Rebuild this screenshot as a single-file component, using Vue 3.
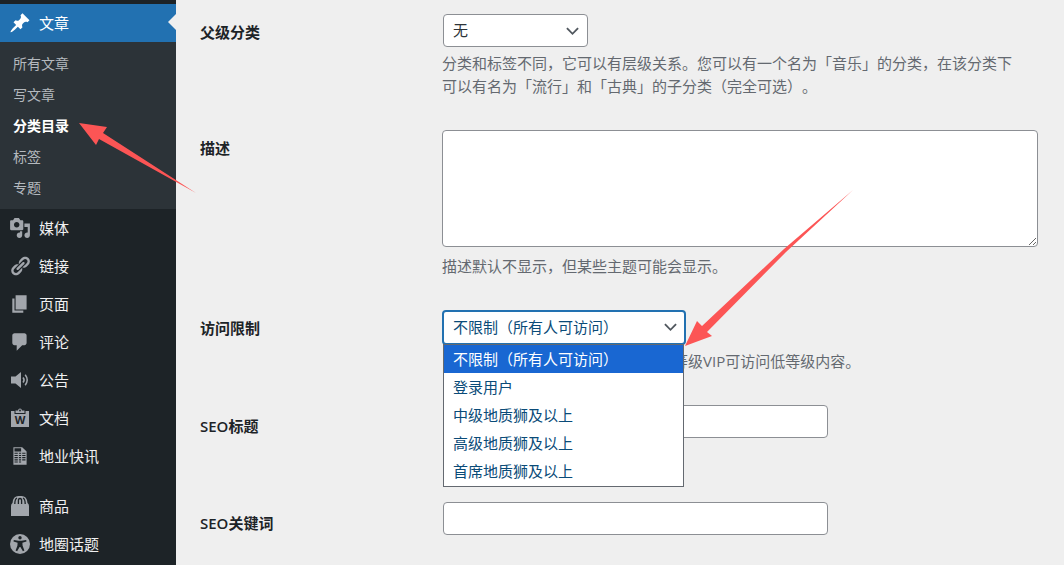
<script setup>
import { ref } from 'vue'

const submenu = ['所有文章', '写文章', '分类目录', '标签', '专题']
const currentSub = '分类目录'

const mainMenu = [
  { icon: 'media', label: '媒体' },
  { icon: 'links', label: '链接' },
  { icon: 'page', label: '页面' },
  { icon: 'comments', label: '评论' },
  { icon: 'volume', label: '公告' },
  { icon: 'docs', label: '文档' },
  { icon: 'sheet', label: '地业快讯' },
]
const extraMenu = [
  { icon: 'bag', label: '商品' },
  { icon: 'access', label: '地圈话题' },
]

const paths = {
  pin: 'M10.44 3.02l1.82-1.82 6.36 6.35-1.83 1.82c-1.05-.68-2.48-.57-3.41.36l-.75.75c-.92.93-1.04 2.35-.35 3.41l-1.83 1.82-2.41-2.41-2.8 2.79c-.42.42-3.38 2.71-3.8 2.29s1.86-3.39 2.28-3.81l2.79-2.79L4.1 9.36l1.83-1.82c1.05.69 2.48.57 3.4-.36l.75-.75c.93-.92 1.05-2.35.36-3.41z',
  media: 'M13 11V4c0-.55-.45-1-1-1h-1.67L9 1H5L3.67 3H2c-.55 0-1 .45-1 1v7c0 .55.45 1 1 1h10c.55 0 1-.45 1-1zM7 4.5c1.38 0 2.5 1.12 2.5 2.5S8.38 9.5 7 9.5 4.5 8.38 4.5 7 5.62 4.5 7 4.5zM14 6h5v10.5c0 1.38-1.12 2.5-2.5 2.5S14 17.88 14 16.5s1.12-2.5 2.5-2.5c.17 0 .34.02.5.05V9h-3V6zm-4 8.05V13h2v3.5c0 1.38-1.12 2.5-2.5 2.5S7 17.88 7 16.5 8.12 14 9.5 14c.17 0 .34.02.5.05z',
  links: 'M17.74 2.76c1.68 1.69 1.68 4.41 0 6.1l-1.53 1.52c-1.12 1.12-2.7 1.47-4.14 1.09l2.62-2.61.76-.77.76-.76c.84-.84.84-2.2 0-3.04-.84-.85-2.2-.85-3.04 0l-.77.76-3.38 3.38c-.37-1.44-.02-3.02 1.1-4.14l1.52-1.53c1.69-1.68 4.42-1.68 6.1 0zM8.59 13.43l5.34-5.34c.42-.42.42-1.1 0-1.52-.44-.43-1.13-.39-1.53 0l-5.33 5.34c-.42.42-.42 1.1 0 1.52.44.43 1.13.39 1.52 0zm-.76 2.29l4.14-4.15c.38 1.44.03 3.02-1.09 4.14l-1.52 1.53c-1.69 1.68-4.41 1.68-6.1 0-1.68-1.68-1.68-4.42 0-6.1l1.53-1.52c1.12-1.12 2.7-1.47 4.14-1.1l-4.14 4.15c-.85.84-.85 2.2 0 3.05.84.84 2.2.84 3.04 0z',
  page: 'M6 15V2h10v13H6zm-1 1h8v2H3V5h2v11z',
  comments: 'M5 2h9c1.1 0 2 .9 2 2v7c0 1.1-.9 2-2 2h-2l-5 5v-5H5c-1.1 0-2-.9-2-2V4c0-1.1.9-2 2-2z',
  sheet: 'M12 2l4 4v12H4V2h8zm-1 4V3H5v3h6zM8 8V7H5v1h3zm3 0V7H9v1h2zm4 0V7h-3v1h3zm-7 2V9H5v1h3zm3 0V9H9v1h2zm4 0V9h-3v1h3zm-7 2v-1H5v1h3zm3 0v-1H9v1h2zm4 0v-1h-3v1h3zm-7 2v-1H5v1h3zm3 0v-1H9v1h2zm4 0v-1h-3v1h3zm-7 2v-1H5v1h3zm3 0v-1H9v1h2z',
}

const levels = ['不限制（所有人可访问）', '登录用户', '中级地质狮及以上', '高级地质狮及以上', '首席地质狮及以上']
const level = ref(levels[0])
const parent = ref('无')
const description = ref('')
const seoTitle = ref('')
const seoKeywords = ref('')
</script>

<template>
  <div class="admin">
    <nav class="sidebar" aria-label="主菜单">
      <a class="item active" href="#posts">
        <svg class="icon" viewBox="0 0 20 20" aria-hidden="true"><path :d="paths.pin" /></svg>
        <span>文章</span>
      </a>
      <ul class="submenu">
        <li v-for="s in submenu" :key="s">
          <a href="#sub" :class="{ current: s === currentSub }">{{ s }}</a>
        </li>
      </ul>
      <ul v-for="(group, g) in [mainMenu, extraMenu]" :key="g" class="group">
        <li v-for="m in group" :key="m.label">
          <a class="item" href="#menu">
            <svg class="icon" :viewBox="paths[m.icon] ? '0 0 20 20' : '-1 -1 22 22'" aria-hidden="true">
              <path v-if="paths[m.icon]" :d="paths[m.icon]" fill-rule="evenodd" />
              <template v-else-if="m.icon === 'volume'">
                <path d="M1 6.500h4.500l5.500-4.500v16l-5.500-4.500H1z" />
                <path class="line" d="M13 7.500q2.200 2.500 0 5M15.200 4.800q4 5.200 0 10.400" />
              </template>
              <template v-else-if="m.icon === 'docs'">
                <path d="M1 3h3.500v3h11V3H19v16H1z" />
                <path d="M5.500 5V2.500H8q.3-2 2-2t2 2h2.500V5z" />
                <circle class="hole" cx="10" cy="2.500" r=".9" />
                <text class="mark" x="10" y="16" text-anchor="middle">W</text>
              </template>
              <template v-else-if="m.icon === 'bag'">
                <path d="M1 20V10Q1 8 2.500 7Q3 0 8.500 0h3Q17 0 17.500 7q1.500 1 1.500 3v10z" />
                <path class="slot" d="M4.800 8Q4.800 3 7 2M8.400 8V4.500q0-2 1.600-2t1.600 2V8M15.200 8q0-5-2.200-6" />
              </template>
              <template v-else>
                <circle cx="10" cy="10" r="10" />
                <circle class="hole" cx="10" cy="3.800" r="1.700" />
                <path class="hole" d="M3.800 6l4.700.8h3l4.700-.8.300 1.500-4.100 1.200.2 3 1.800 4.900-1.500.6L10.400 13h-.8l-2.500 4.200-1.500-.6 1.800-4.900.2-3-4.100-1.200z" />
              </template>
            </svg>
            <span>{{ m.label }}</span>
          </a>
        </li>
      </ul>
    </nav>

    <main class="content">
      <form @submit.prevent>
        <div class="row">
          <label for="parent">父级分类</label>
          <div class="field">
            <div class="select short">
              <select id="parent" v-model="parent"><option>无</option></select>
              <svg class="chevron" viewBox="0 0 14 10" aria-hidden="true"><path d="M1 2l6 6 6-6" /></svg>
            </div>
            <p>分类和标签不同，它可以有层级关系。您可以有一个名为「音乐」的分类，在该分类下<br>可以有名为「流行」和「古典」的子分类（完全可选）。</p>
          </div>
        </div>

        <div class="row">
          <label for="desc">描述</label>
          <div class="field area">
            <textarea id="desc" v-model="description"></textarea>
            <p>描述默认不显示，但某些主题可能会显示。</p>
          </div>
        </div>

        <div class="row">
          <label for="level">访问限制</label>
          <div class="field">
            <div class="select wide focus">
              <select id="level" v-model="level">
                <option v-for="l in levels" :key="l">{{ l }}</option>
              </select>
              <svg class="chevron" viewBox="0 0 14 10" aria-hidden="true"><path d="M1 2l6 6 6-6" /></svg>
              <ul class="options" role="listbox" aria-label="访问限制">
                <li v-for="l in levels" :key="l" role="option" :aria-selected="l === level" @click="level = l">{{ l }}</li>
              </ul>
              <svg class="arrow to-list" viewBox="0 0 170 158" aria-hidden="true">
                <path d="M1 157L13 132L18 137L100 60L169 1L102 63L23 143L28 147Z" />
              </svg>
            </div>
            <p class="tail">等级VIP可访问低等级内容。</p>
          </div>
        </div>

        <div class="row seo">
          <label for="seo-title">SEO标题</label>
          <div class="field"><input id="seo-title" v-model="seoTitle" type="text"></div>
        </div>

        <div class="row seo">
          <label for="seo-keys">SEO关键词</label>
          <div class="field"><input id="seo-keys" v-model="seoKeywords" type="text"></div>
        </div>
      </form>
    </main>

    <svg class="arrow to-menu" viewBox="0 0 118 72" aria-hidden="true">
      <path d="M0 1L28 5L24 11L117 71L20 17L17 23Z" />
    </svg>
  </div>
</template>

<style>
body {
  margin: 0;
  background: #efefef;
}
</style>

<style scoped>
.admin {
  position: relative;
  display: flex;
  height: 100vh;
  overflow: hidden;
  font: 15px/23px "Open Sans", "Noto Sans CJK SC", sans-serif;
  text-spacing-trim: space-all;
  color: #1d2327;
}

ul {
  margin: 0;
  padding: 0;
  list-style: none;
}

.sidebar {
  flex: none;
  width: 176px;
  padding-top: 4px;
  box-sizing: border-box;
  background: #1d2327;
}

.item {
  position: relative;
  display: flex;
  align-items: center;
  gap: 8px;
  height: 38px;
  padding-left: 9px;
  font-size: 15px;
  color: #f0f0f1;
  text-decoration: none;
}

.item.active {
  background: #2271b1;
  color: #fff;
}

.item.active::after {
  content: "";
  position: absolute;
  top: 10px;
  right: 0;
  border: 8px solid transparent;
  border-left: 0;
  border-right-color: #efefef;
}

.icon {
  flex: none;
  width: 22px;
  height: 22px;
  fill: #a2a6ac;
}

.active .icon {
  fill: #fff;
}

.icon .line {
  fill: none;
  stroke: #a2a6ac;
  stroke-width: 1.5;
}

.icon .slot {
  fill: none;
  stroke: #1d2327;
  stroke-width: 1.3;
}

.icon .hole,
.icon .mark {
  fill: #1d2327;
}

.icon .mark {
  font-size: 11px;
  font-weight: 700;
}

.submenu {
  padding: 6px 0;
  background: #2c3338;
}

.submenu a {
  display: block;
  padding-left: 13px;
  font-size: 14px;
  line-height: 31px;
  color: #b4b9be;
  text-decoration: none;
}

.submenu .current {
  font-weight: 700;
  color: #fff;
}

.group + .group {
  margin-top: 12px;
}

.content {
  flex: 1;
  min-width: 0;
  padding: 14px 26px 0 24px;
}

.row {
  display: grid;
  grid-template-columns: 242px 1fr;
}

.row > label {
  padding-top: 7px;
  font-weight: 600;
}

.seo {
  min-height: 97px;
}

.seo > label {
  padding-top: 10px;
}

.field {
  padding-bottom: 32px;
}

.field p {
  margin: 5px 0 0;
  color: #646970;
}

.area p {
  margin-top: 8px;
}

.field .tail {
  padding-left: 231px;
}

.select {
  position: relative;
}

.short {
  width: 145px;
  margin: 0 1px;
}

.wide {
  width: 244px;
}

select,
input,
textarea {
  display: block;
  box-sizing: border-box;
  width: 100%;
  border: 1px solid #8c8f94;
  border-radius: 4px;
  background: #fff;
  color: #2c3338;
  font: inherit;
}

select {
  height: 33px;
  padding: 0 24px 0 9px;
  appearance: none;
}

.focus select {
  height: 35px;
  border: 2px solid #2271b1;
  padding-left: 9px;
  color: #0a4b78;
}

input {
  max-width: 385px;
  height: 33px;
  margin: 0 1px;
  padding: 0 8px;
}

textarea {
  height: 117px;
  padding: 4px 8px;
  resize: vertical;
}

.chevron {
  position: absolute;
  top: 12px;
  right: 9px;
  width: 13px;
  height: 10px;
  fill: none;
  stroke: #50575e;
  stroke-width: 2;
}

.options {
  position: absolute;
  z-index: 2;
  top: 34px;
  left: 1px;
  right: 2px;
  padding-bottom: 1px;
  border: 1px solid #646970;
  background: #fff;
  color: #0a4b78;
}

.options li {
  padding-left: 9px;
  line-height: 28px;
}

.options [aria-selected="true"] {
  background: #1967d2;
  color: #fff;
}

.arrow {
  position: absolute;
  z-index: 3;
  fill: #fc5555;
  pointer-events: none;
}

.to-list {
  left: 242px;
  bottom: -2px;
  width: 170px;
  height: 158px;
}

.to-menu {
  left: 79px;
  top: 122px;
  width: 118px;
  height: 72px;
}
</style>
